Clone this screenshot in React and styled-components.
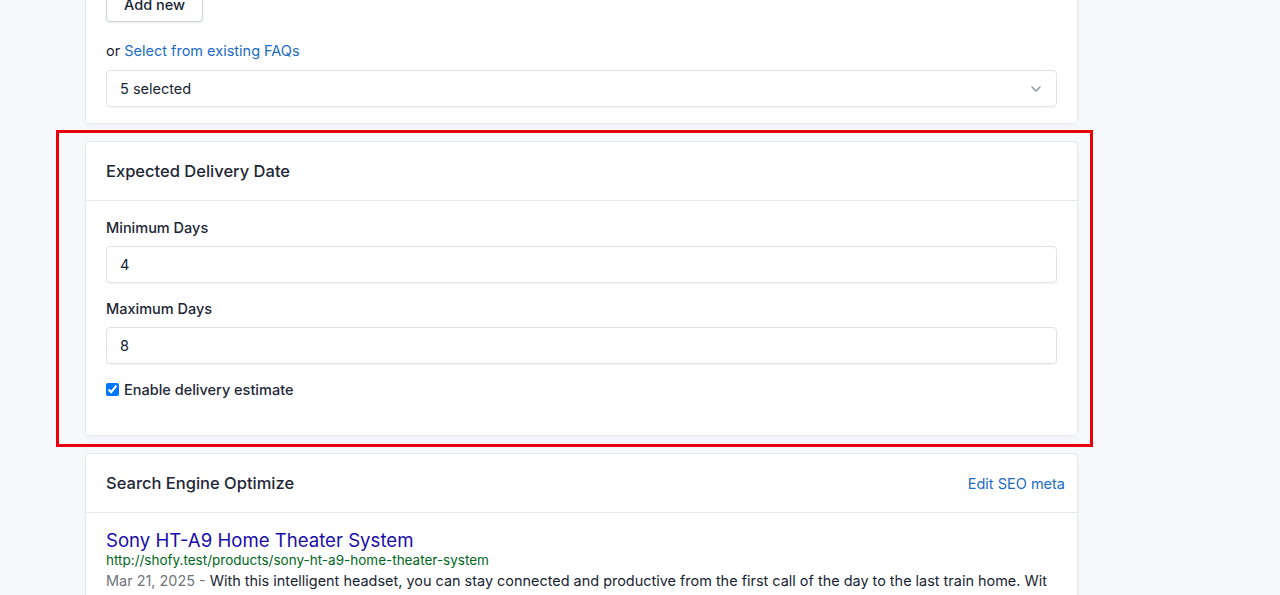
import React from "react";
import styled, { createGlobalStyle } from "styled-components";

const GlobalStyle = createGlobalStyle`
  html, body { margin: 0; padding: 0; }
  body {
    background: #f6f8fb;
    font-family: Inter, "Noto Sans", sans-serif;
    font-size: 14.5px;
    color: #182433;
    overflow: hidden;
  }
  * { box-sizing: border-box; }
`;

const Page = styled.div`
  width: 1280px;
  height: 595px;
  overflow: hidden;
`;

const Column = styled.div`
  width: 993px;
  margin-left: 85px;
  margin-top: -31px;
  display: flex;
  flex-direction: column;
  gap: 17px;
`;

const Card = styled.section`
  background: #fff;
  border: 1px solid #e6e9ee;
  border-radius: 4px;
  box-shadow: 0 2px 4px rgba(24, 36, 51, 0.03);
`;

const CardHeader = styled.header`
  display: flex;
  align-items: center;
  justify-content: space-between;
  padding: 17px 12px 17px 20px;
  border-bottom: 1px solid #e6e9ee;
`;

const CardTitle = styled.h3`
  margin: 0;
  font-size: 16.5px;
  line-height: 24px;
  font-weight: 500;
  color: #1d2736;
`;

const CardBody = styled.div`
  padding: 16px 20px;
`;

const Link = styled.a`
  color: #206bc4;
  text-decoration: none;
  font-size: 14.5px;
  cursor: pointer;
`;

const Button = styled.button`
  height: 36px;
  padding: 0 17px;
  background: #fff;
  border: 1px solid #cdd3db;
  border-radius: 4px;
  box-shadow: 0 1px 2px rgba(24, 36, 51, 0.08);
  font-family: inherit;
  font-size: 14.5px;
  font-weight: 500;
  color: #182433;
`;

const HelpLine = styled.div`
  margin-top: 19px;
  margin-bottom: 9px;
  font-size: 14.5px;
  line-height: 20px;
`;

const SelectBox = styled.div`
  display: flex;
  align-items: center;
  justify-content: space-between;
  height: 37px;
  padding: 0 12px 0 13px;
  border: 1px solid #dfe3e8;
  border-radius: 4px;
  box-shadow: 0 1px 1px rgba(24, 36, 51, 0.04);
  font-size: 14.5px;
  color: #182433;
`;

const Field = styled.div`
  margin-bottom: 16px;
`;

const Label = styled.label`
  display: block;
  font-size: 14.5px;
  line-height: 20px;
  font-weight: 500;
  margin: 1px 0 8px;
  color: #1d2736;
`;

const Input = styled.input`
  display: block;
  width: 100%;
  height: 37px;
  padding: 0 13px;
  border: 1px solid #dfe3e8;
  border-radius: 4px;
  box-shadow: 0 1px 1px rgba(24, 36, 51, 0.04);
  font-family: inherit;
  font-size: 14.5px;
  color: #182433;
  background: #fff;
  outline: none;
`;

const CheckRow = styled.label`
  display: flex;
  align-items: center;
  font-size: 14.5px;
  line-height: 20px;
  font-weight: 500;
  margin-bottom: 19px;
  color: #1d2736;
`;

const Check = styled.input`
  width: 13px;
  height: 13px;
  margin: 0 5px 2px 0;
`;

const Highlight = styled.div`
  position: relative;
  &::after {
    content: "";
    position: absolute;
    left: -29px;
    right: -15px;
    top: -11px;
    bottom: -11px;
    border: 3px solid #e8000b;
    pointer-events: none;
  }
`;

const SeoTitle = styled.div`
  font-size: 18.6px;
  line-height: 22px;
  color: #1a0dab;
`;

const SeoUrl = styled.div`
  font-size: 13.5px;
  line-height: 18px;
  color: #006621;
`;

const SeoDesc = styled.div`
  font-size: 14.45px;
  line-height: 24px;
  color: #182433;
  white-space: nowrap;
  overflow: hidden;
`;

const SeoDate = styled.span`
  color: #70757a;
`;

const Chevron = () => (
  <svg width="16" height="16" viewBox="0 0 24 24" fill="none" stroke="#8a94a3" strokeWidth="2" strokeLinecap="round" strokeLinejoin="round">
    <path d="M6 9l6 6 6-6" />
  </svg>
);

export default function App() {
  return (
    <Page>
      <GlobalStyle />
      <Column>
        <Card>
          <CardBody>
            <Button>Add new</Button>
            <HelpLine>
              or <Link>Select from existing FAQs</Link>
            </HelpLine>
            <SelectBox>
              <span>5 selected</span>
              <Chevron />
            </SelectBox>
          </CardBody>
        </Card>

        <Highlight>
          <Card>
            <CardHeader>
              <CardTitle>Expected Delivery Date</CardTitle>
            </CardHeader>
            <CardBody>
              <Field>
                <Label>Minimum Days</Label>
                <Input defaultValue="4" />
              </Field>
              <Field>
                <Label>Maximum Days</Label>
                <Input defaultValue="8" />
              </Field>
              <CheckRow>
                <Check type="checkbox" defaultChecked />
                Enable delivery estimate
              </CheckRow>
            </CardBody>
          </Card>
        </Highlight>

        <Card>
          <CardHeader>
            <CardTitle>Search Engine Optimize</CardTitle>
            <Link>Edit SEO meta</Link>
          </CardHeader>
          <CardBody>
            <SeoTitle>Sony HT-A9 Home Theater System</SeoTitle>
            <SeoUrl>http://shofy.test/products/sony-ht-a9-home-theater-system</SeoUrl>
            <SeoDesc>
              <SeoDate>Mar 21, 2025 - </SeoDate>
              With this intelligent headset, you can stay connected and productive from the first call of the day to the last train home. Wit
            </SeoDesc>
          </CardBody>
        </Card>
      </Column>
    </Page>
  );
}
